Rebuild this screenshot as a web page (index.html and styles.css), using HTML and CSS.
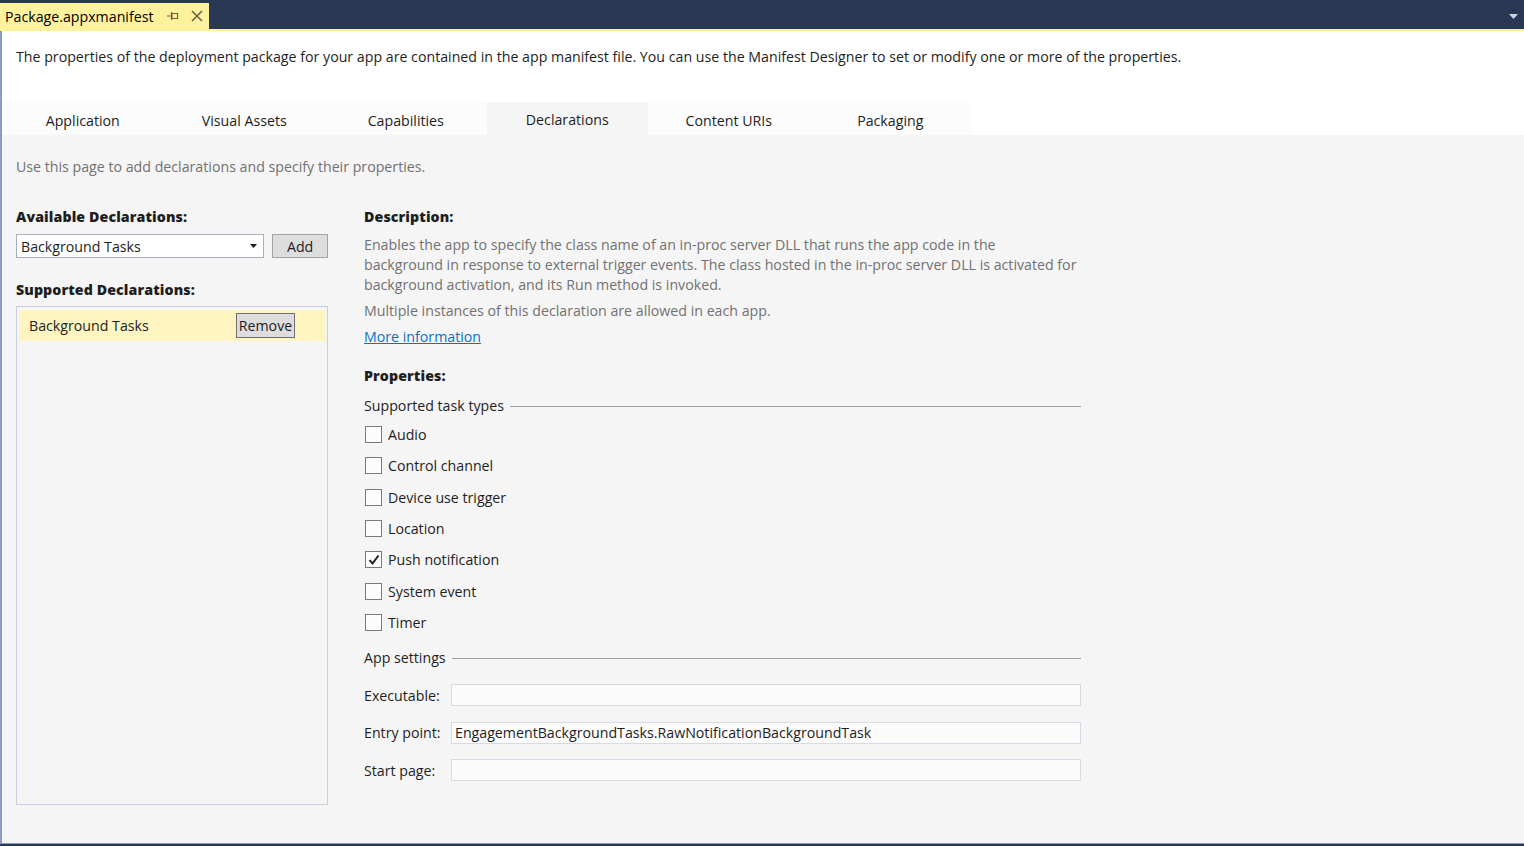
FILE: index.html
```html
<!DOCTYPE html>
<html lang="en">
<head>
<meta charset="utf-8">
<title>Package.appxmanifest</title>
<link rel="stylesheet" href="styles.css">
</head>
<body>
<div class="window">
  <div class="doc-bar">
    <div class="doc-tab">
      <span class="doc-title">Package.appxmanifest</span>
      <svg class="pin" width="12" height="10" viewBox="0 0 12 10"><path d="M0 5h4M4.5 1v8M5 2.5h5.5v5H5z" fill="none" stroke="#6b6448" stroke-width="1.2"/></svg>
      <svg class="close" width="12" height="12" viewBox="0 0 12 12"><path d="M1 1l10 10M11 1L1 11" stroke="#6b6448" stroke-width="1.6"/></svg>
    </div>
    <div class="doc-spacer"></div>
    <svg class="overflow" width="9" height="5" viewBox="0 0 9 5"><path d="M0 0h9L4.5 5z" fill="#ced4df"/></svg>
  </div>
  <div class="accent"></div>
  <div class="editor">
    <div class="intro">
      <p class="intro-text">The properties of the deployment package for your app are contained in the app manifest file. You can use the Manifest Designer to set or modify one or more of the properties.</p>
    </div>
    <div class="tabs">
      <div class="tab">Application</div>
      <div class="tab">Visual Assets</div>
      <div class="tab">Capabilities</div>
      <div class="tab active">Declarations</div>
      <div class="tab">Content URIs</div>
      <div class="tab">Packaging</div>
    </div>
    <div class="page">
      <p class="hint">Use this page to add declarations and specify their properties.</p>
      <div class="columns">
        <div class="left">
          <h3 class="heading">Available Declarations:</h3>
          <div class="add-row">
            <div class="combo">
              <span>Background Tasks</span>
              <svg width="7" height="4" viewBox="0 0 7 4"><path d="M0 0h7L3.5 4z" fill="#1e1e1e"/></svg>
            </div>
            <div class="btn add">Add</div>
          </div>
          <h3 class="heading supported">Supported Declarations:</h3>
          <div class="listbox">
            <div class="list-item">
              <span>Background Tasks</span>
              <div class="btn remove">Remove</div>
            </div>
          </div>
        </div>
        <div class="right">
          <h3 class="heading">Description:</h3>
          <p class="desc">Enables the app to specify the class name of an in-proc server DLL that runs the app code in the background in response to external trigger events. The class hosted in the in-proc server DLL is activated for background activation, and its Run method is invoked.</p>
          <p class="desc multi">Multiple instances of this declaration are allowed in each app.</p>
          <a class="more" href="#">More information</a>
          <h3 class="heading props">Properties:</h3>
          <div class="group-title"><span>Supported task types</span><div class="rule"></div></div>
          <div class="checks">
            <div class="check"><span class="box"></span><span>Audio</span></div>
            <div class="check"><span class="box"></span><span>Control channel</span></div>
            <div class="check"><span class="box"></span><span>Device use trigger</span></div>
            <div class="check"><span class="box"></span><span>Location</span></div>
            <div class="check"><span class="box checked"><svg width="14" height="14" viewBox="0 0 14 14"><path d="M2.5 7.2l3 3.3L11.5 2.5" fill="none" stroke="#1e1e1e" stroke-width="2"/></svg></span><span>Push notification</span></div>
            <div class="check"><span class="box"></span><span>System event</span></div>
            <div class="check"><span class="box"></span><span>Timer</span></div>
          </div>
          <div class="group-title app"><span>App settings</span><div class="rule"></div></div>
          <div class="fields">
            <div class="field"><label>Executable:</label><div class="input"></div></div>
            <div class="field"><label>Entry point:</label><div class="input">EngagementBackgroundTasks.RawNotificationBackgroundTask</div></div>
            <div class="field"><label>Start page:</label><div class="input"></div></div>
          </div>
        </div>
      </div>
    </div>
  </div>
  <div class="bottom-bar"></div>
</div>
</body>
</html>
```

FILE: styles.css
```css
* { box-sizing: border-box; }
html, body { margin: 0; padding: 0; }
body {
  width: 1524px;
  height: 846px;
  overflow: hidden;
  font-family: "Open Sans", "Noto Sans", sans-serif;
  font-size: 14.2px;
  color: #1e1e1e;
  background: #293955;
}
p, h3 { margin: 0; }
.window { display: flex; flex-direction: column; height: 846px; }

.doc-bar {
  height: 29px;
  background: #293955;
  display: flex;
  align-items: flex-end;
}
.doc-tab {
  width: 209px;
  height: 26px;
  background: #fff29d;
  display: flex;
  align-items: center;
  padding-left: 5px;
  color: #000;
}
.doc-title { width: 162px; }
.pin { margin-top: -1px; }
.close { margin-left: 12px; }
.doc-spacer { flex: 1; }
.overflow { margin: 0 6px 10px 0; }
.accent { height: 2px; background: #fff29d; }

.editor {
  flex: 1;
  display: flex;
  flex-direction: column;
  border-left: 2px solid #8c9bc6;
  border-bottom: 1px solid #8c9bc6;
  background: #f5f5f5;
}
.intro { background: #fff; padding: 16px 0 35px 14px; }
.intro-text { line-height: 20px; }

.tabs { display: flex; background: #fff; height: 33px; }
.tab {
  width: 161.5px;
  display: flex;
  align-items: center;
  justify-content: center;
  background: #fcfcfc;
  padding-top: 4px;
}
.tab.active { background: #f5f5f5; padding-top: 2px; }

.page { flex: 1; padding: 22px 0 0 14px; }
.hint { color: #717171; line-height: 20px; }
.columns { display: flex; gap: 36px; margin-top: 30px; }
.left { width: 312px; display: flex; flex-direction: column; }
.right { width: 717px; display: flex; flex-direction: column; }
.heading { font-weight: 800; font-size: 14.2px; line-height: 20px; letter-spacing: 0.1px; }

.add-row { display: flex; gap: 8px; margin-top: 7px; }
.combo {
  width: 249px;
  height: 24px;
  background: #fff;
  border: 1px solid #a8adbc;
  display: flex;
  align-items: center;
  justify-content: space-between;
  padding: 0 4px 0 4px;
}
.combo svg { margin-right: 2px; }
.btn {
  background: #dddddd;
  border: 1px solid #a3a3a3;
  display: flex;
  align-items: center;
  justify-content: center;
}
.add { width: 56px; height: 24px; }
.supported { margin-top: 22px; }
.listbox {
  margin-top: 6px;
  height: 499px;
  border: 1px solid #ccccdc;
  padding: 3px 2px;
}
.list-item {
  height: 31px;
  background: #fdf4c0;
  display: flex;
  align-items: center;
  justify-content: space-between;
  padding: 0 30px 0 10px;
}
.remove { width: 59px; height: 25px; border-color: #707070; }

.desc { color: #717171; line-height: 20px; margin-top: 8px; max-width: 714px; }
.desc.multi { margin-top: 6px; }
.more {
  color: #0e70c0;
  line-height: 20px;
  margin-top: 6px;
  align-self: flex-start;
}
.props { margin-top: 19px; }
.group-title { display: flex; align-items: center; gap: 6px; margin-top: 10px; line-height: 20px; }
.rule { flex: 1; height: 1px; background: #a0a0a0; }
.checks { display: flex; flex-direction: column; margin-top: 3px; }
.check { height: 31.33px; display: flex; align-items: center; gap: 6px; }
.box {
  width: 17px;
  height: 17px;
  margin-left: 1px;
  border: 1px solid #7a7a7a;
  background: #fcfcfc;
  display: flex;
  align-items: center;
  justify-content: center;
}
.group-title.app { margin-top: 10px; }
.fields { display: flex; flex-direction: column; gap: 15.5px; margin-top: 16px; }
.field { display: flex; align-items: center; }
.field label { width: 87px; }
.input {
  flex: 1;
  height: 22px;
  background: #fbfbfb;
  border: 1px solid #d9d9e6;
  padding-left: 3px;
  display: flex;
  align-items: center;
}
.bottom-bar { height: 2px; background: #293955; }
```
